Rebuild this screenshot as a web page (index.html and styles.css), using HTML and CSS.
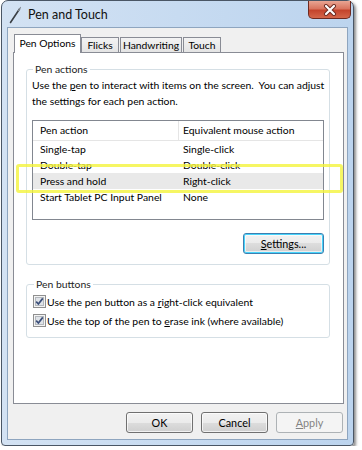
FILE: index.html
```html
<!DOCTYPE html>
<html>
<head>
    <title>Pen and Touch</title>
    <link rel="stylesheet" href="styles.css">
</head>
<body>
    <div class="window">
        <div class="titlebar">
            <svg class="pen-icon" width="14" height="18" viewBox="0 0 14 18">
                <path d="M2.5 16.5 L11.5 3" stroke="#3a3f45" stroke-width="1.6" stroke-linecap="round" fill="none"/>
                <path d="M10.5 4.5 L12.5 1.5" stroke="#8a9099" stroke-width="1.2" stroke-linecap="round" fill="none"/>
            </svg>
            <span class="title">Pen and Touch</span>
            <div class="close">
                <svg width="14" height="12" viewBox="0 0 14 12">
                    <path d="M3 2 L11 10 M11 2 L3 10" stroke="#6b2a20" stroke-width="4" stroke-linecap="round"/>
                    <path d="M3 2 L11 10 M11 2 L3 10" stroke="#ffffff" stroke-width="2.2" stroke-linecap="round"/>
                </svg>
            </div>
        </div>

        <div class="client">
            <div class="tabs">
                <div class="tab active tab-w67">Pen Options</div>
                <div class="tab tab-w38">Flicks</div>
                <div class="tab tab-w62">Handwriting</div>
                <div class="tab tab-w38">Touch</div>
            </div>

            <div class="pane">
                <fieldset class="group group-actions">
                    <legend>Pen actions</legend>
                    <p class="intro">Use the <u>p</u>en to interact with items on the screen.&nbsp; You can adjust the settings for each pen action.</p>

                    <div class="listview">
                        <div class="lv-row lv-head">
                            <span class="lv-cell">Pen action</span>
                            <span class="lv-cell lv-sep">Equivalent mouse action</span>
                        </div>
                        <div class="lv-row">
                            <span class="lv-cell">Single-tap</span>
                            <span class="lv-cell">Single-click</span>
                        </div>
                        <div class="lv-row">
                            <span class="lv-cell">Double-tap</span>
                            <span class="lv-cell">Double-click</span>
                        </div>
                        <div class="lv-row selected">
                            <span class="lv-cell">Press and hold</span>
                            <span class="lv-cell">Right-click</span>
                        </div>
                        <div class="lv-row">
                            <span class="lv-cell">Start Tablet PC Input Panel</span>
                            <span class="lv-cell">None</span>
                        </div>
                    </div>

                    <div class="group-footer">
                        <button class="btn focused"><u>S</u>ettings...</button>
                    </div>
                </fieldset>

                <fieldset class="group group-buttons">
                    <legend>Pen buttons</legend>
                    <label class="check">
                        <svg class="box" width="13" height="13" viewBox="0 0 13 13">
                            <rect x="0.5" y="0.5" width="12" height="12" fill="#f4f4f4" stroke="#8f8f8f"/>
                            <rect x="2.5" y="2.5" width="8" height="8" fill="#dfe3e8" stroke="#b4b8bd"/>
                            <path d="M3.2 6.6 L5.4 9 L9.8 3.4" stroke="#3c4f7a" stroke-width="1.7" fill="none"/>
                        </svg>
                        <span>Use the pen button as a <u>r</u>ight-click equivalent</span>
                    </label>
                    <label class="check">
                        <svg class="box" width="13" height="13" viewBox="0 0 13 13">
                            <rect x="0.5" y="0.5" width="12" height="12" fill="#f4f4f4" stroke="#8f8f8f"/>
                            <rect x="2.5" y="2.5" width="8" height="8" fill="#dfe3e8" stroke="#b4b8bd"/>
                            <path d="M3.2 6.6 L5.4 9 L9.8 3.4" stroke="#3c4f7a" stroke-width="1.7" fill="none"/>
                        </svg>
                        <span>Use the top of the pen to <u>e</u>rase ink (where available)</span>
                    </label>
                </fieldset>
            </div>

            <div class="dialog-buttons">
                <button class="btn">OK</button>
                <button class="btn">Cancel</button>
                <button class="btn disabled"><u>A</u>pply</button>
            </div>
        </div>

        <!-- yellow annotation box drawn over the screenshot -->
        <div class="annotation"></div>
    </div>
</body>
</html>
```

FILE: styles.css
```css
body {
    margin: 0;
    background: #ffffff;
    font-family: Lato, "Open Sans", sans-serif;
    font-size: 10.4px;
    color: #000;
}
.window {
    position: relative;
    box-sizing: border-box;
    width: 353px;
    height: 446px;
    margin-left: 1px;
    border: 1px solid #4a5665;
    border-radius: 7px 7px 4px 4px;
    background: linear-gradient(to right, #d3e2f3 0%, #c7dbf1 50%, #bcd4ee 100%);
    box-shadow: 2px 2px 3px rgba(0,0,0,0.45);
}
.titlebar {
    display: flex;
    align-items: flex-start;
    height: 26px;
    padding: 0 2px 0 6px;
}
.pen-icon {
    margin-top: 5px;
}
.title {
    margin-left: 6px;
    margin-top: 6px;
    font-size: 12.5px;
    line-height: 16px;
    color: #111;
}
.close {
    margin-left: auto;
    width: 43px;
    height: 18px;
    box-sizing: border-box;
    display: flex;
    align-items: center;
    justify-content: center;
    border: 1px solid #6e2a20;
    border-top: none;
    border-radius: 0 0 5px 5px;
    background: linear-gradient(to bottom, #e9a593 0%, #d9755f 45%, #c4442c 55%, #d4664a 100%);
}
.client {
    box-sizing: border-box;
    height: 413px;
    margin: 0 5px;
    padding: 6px 4px 0 5px;
    background: #f0f0f0;
    border: 1px solid #8ea5bf;
}
.tabs {
    display: flex;
    align-items: flex-end;
    height: 18px;
    margin-left: 1px;
    font-size: 10.3px;
}
.tab {
    box-sizing: border-box;
    height: 15px;
    padding: 0;
    text-align: center;
    white-space: nowrap;
    line-height: 14px;
    border: 1px solid #898c95;
    border-bottom: none;
    background: linear-gradient(to bottom, #f3f3f3, #e4e4e4);
    margin-right: 1px;
}
.tab-w67 { width: 67px; }
.tab-w62 { width: 62px; }
.tab-w38 { width: 38px; }
.tab.active {
    position: relative;
    z-index: 1;
    height: 19px;
    margin-bottom: -1px;
    margin-right: 0;
    line-height: 17px;
    background: #ffffff;
}
.pane {
    box-sizing: border-box;
    width: 331px;
    height: 352px;
    padding: 9px 13px 0 12px;
    background: #ffffff;
    border: 1px solid #898c95;
}
.group {
    margin: 0;
    padding: 0 5px 0 5px;
    border: 1px solid #d5dfe5;
    border-radius: 3px;
    min-width: 0;
}
.group legend {
    padding: 0 2px;
    margin-left: 1px;
    line-height: 15px;
    color: #1e1e1e;
}
.intro {
    margin: 0 -8px 0 0;
    line-height: 16px;
}
.listview {
    box-sizing: border-box;
    height: 100px;
    margin-top: 11px;
    border: 1px solid #828790;
}
.lv-row {
    display: grid;
    grid-template-columns: 145px 1fr;
    height: 16px;
    line-height: 16px;
}
.lv-row.lv-head {
    height: 19px;
    line-height: 18px;
    border-bottom: 1px solid #e5e5e5;
}
.lv-cell {
    padding-left: 7px;
    white-space: nowrap;
}
.lv-cell.lv-sep {
    border-left: 1px solid #e5e5e5;
    padding-left: 4px;
}
.lv-row:not(.lv-head) .lv-cell + .lv-cell {
    padding-left: 5px;
}
.lv-row.selected {
    background: #e9e9e9;
}
.group-footer {
    display: flex;
    justify-content: flex-end;
    margin-top: 13px;
    padding-bottom: 10px;
}
.btn {
    box-sizing: border-box;
    width: 67px;
    height: 21px;
    padding: 0;
    font-family: inherit;
    font-size: 10.8px;
    color: #000;
    border: 1px solid #707070;
    border-radius: 3px;
    background: linear-gradient(to bottom, #f2f2f2 0%, #ebebeb 50%, #dddddd 50%, #cfcfcf 100%);
    box-shadow: inset 0 0 0 1px rgba(255,255,255,0.7);
}
.btn.focused {
    width: 81px;
    border-color: #3c7fb1;
    box-shadow: inset 0 0 0 1px #48d4fb, inset 0 0 0 2px rgba(255,255,255,0.6);
}
.btn.disabled {
    color: #838383;
    border-color: #adb2b5;
    background: #f4f4f4;
    box-shadow: none;
}
.group-buttons {
    margin-top: 12px;
    padding: 0 6px 7px 6px;
}
.check {
    display: flex;
    align-items: center;
    height: 19px;
}
.check .box {
    margin-right: 1px;
    flex: none;
}
.dialog-buttons {
    display: flex;
    justify-content: flex-end;
    gap: 8px;
    margin-top: 8px;
    padding-right: 0;
}
.annotation {
    position: absolute;
    left: 14px;
    top: 163px;
    width: 327px;
    height: 29px;
    box-sizing: border-box;
    border: 3px solid rgba(244, 244, 60, 0.8);
    border-radius: 3px;
}
```
